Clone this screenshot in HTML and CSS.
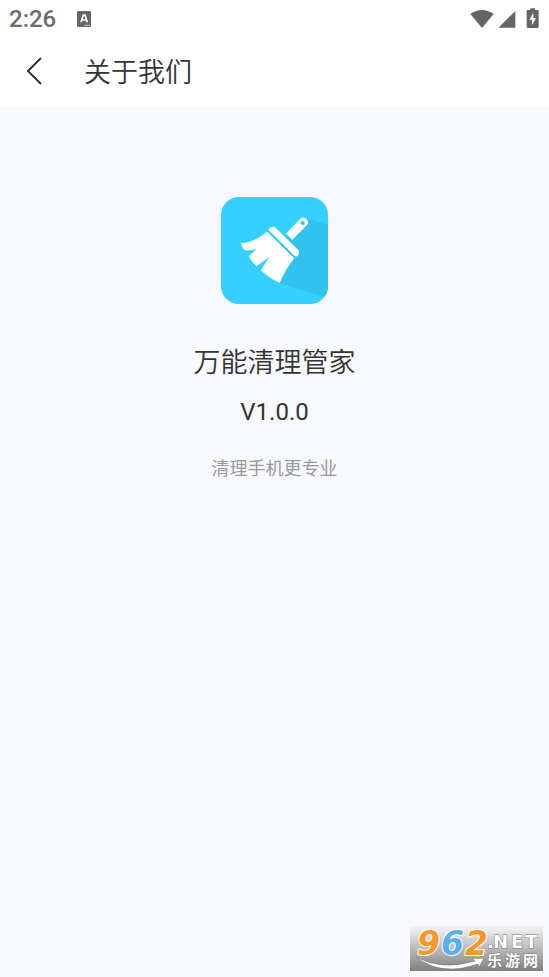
FILE: index.html
```html
<!DOCTYPE html>
<html lang="zh-CN">
<head>
<meta charset="utf-8">
<meta name="viewport" content="width=device-width, initial-scale=1">
<title>关于我们</title>
<link rel="stylesheet" href="styles.css">
</head>
<body>
<div class="status">
  <span class="clock">2:26</span>
  <svg class="notice" viewBox="0 0 42 48" aria-hidden="true">
    <rect width="42" height="48" rx="4" fill="#656565"/>
    <path d="M12 34 19 12h5l7 22M15 27h13" fill="none" stroke="#fff" stroke-width="5"/>
    <path d="M22 43h17" stroke="#fff" stroke-width="2"/>
  </svg>
  <svg class="signals" viewBox="0 0 210 66" aria-hidden="true">
    <g fill="#656565">
      <path d="M1 18Q36-6 71 18L36 60Z"/>
      <path d="M136 9v50H85Z"/>
      <path d="M181 1h14v5h7q4 0 4 4v46q0 4-4 4h-28q-4 0-4-4V10q0-4 4-4h7Z"/>
    </g>
    <path d="m190 14-12 21h8v17l12-22h-8Z" fill="#fff"/>
  </svg>
</div>
<header class="bar">
  <button class="back" type="button" aria-label="返回">
    <svg viewBox="0 0 18 28" aria-hidden="true"><path d="M16 1 3 14l13 13" fill="none" stroke="#333" stroke-width="2"/></svg>
  </button>
  <h1 class="title">关于我们</h1>
</header>
<main class="about">
  <svg class="logo" viewBox="21 21 321 321" aria-hidden="true">
    <defs><clipPath id="tile"><rect x="21" y="21" width="321" height="321" rx="54"/></clipPath></defs>
    <g clip-path="url(#tile)">
      <rect x="21" y="21" width="321" height="321" fill="#35d0ff"/>
      <path d="M275 83 342 105V325L197 279 180 180Z" fill="#31c2ee"/>
    </g>
    <path fill="#fff" fill-rule="evenodd" d="M216 131 258 87Q267 79 277 86 286 95 279 105L235 149ZM266 93a6 6 0 1 0 .1 0Z"/>
    <path fill="#fff" d="M163 119Q170 106 183 112L252 179Q258 187 251 198L244 200Z"/>
    <path fill="#fff" d="M159 125 241 205Q213 240 197 279 166 265 140 241L167 200 127 229Q112 213 104 198L129 176Q108 184 91 180 83 171 81 159 116 160 159 125Z"/>
  </svg>
  <h2 class="name">万能清理管家</h2>
  <p class="version">V1.0.0</p>
  <p class="slogan">清理手机更专业</p>
</main>
<svg class="mark" viewBox="0 0 133 45" role="img" aria-label="962.NET 乐游网">
  <defs>
    <linearGradient id="fade" x2="0" y2="1"><stop stop-color="#f4f4f7"/><stop offset="1" stop-color="#808080"/></linearGradient>
  </defs>
  <rect width="133" height="45" fill="url(#fade)"/>
  <path d="M6 31Q32 45 65 35L62 33 74 32 69 41 68 38Q31 51 6 31Z" fill="#fff" stroke="#777" stroke-width=".6"/>
  <text class="digits" x="7 31 55" y="29"><tspan class="orange">9</tspan><tspan class="blue">6</tspan><tspan class="orange">2</tspan></text>
  <text class="net" x="77 83 101 115" y="22">.NET</text>
  <text class="site" x="77 95 113" y="40">乐游网</text>
</svg>
</body>
</html>
```

FILE: styles.css
```css
* { box-sizing: border-box; }
body {
  margin: 0;
  min-height: 100vh;
  display: flex;
  flex-direction: column;
  background: #f8f9ff;
  color: #333;
  font-family: Roboto, "Noto Sans CJK SC", sans-serif;
}
.status {
  display: flex;
  align-items: center;
  height: 38px;
  padding: 0 9px;
  background: #fff;
}
.clock {
  font-size: 24px;
  line-height: 38px;
  font-weight: 500;
  color: #6c6c6c;
}
.notice { width: 14px; height: 16px; margin-left: 21px; }
.signals { width: 70px; height: 22px; margin-left: auto; }
.bar {
  display: flex;
  align-items: center;
  height: 68px;
  gap: 32px;
  padding: 0 16px 2px;
  background: #fff;
}
.back {
  width: 36px;
  height: 48px;
  padding: 0;
  border: 0;
  background: none;
}
.back svg { display: block; width: 18px; height: 28px; margin: 0 auto; }
.title, .name {
  margin: 0;
  font-size: 27px;
  line-height: 40px;
  font-weight: 350;
  font-family: "Noto Sans CJK SC", sans-serif;
}
.about {
  flex: 1;
  display: flex;
  flex-direction: column;
  align-items: center;
  padding-top: 91px;
}
.logo { width: 107px; height: 107px; }
.name { margin-top: 37px; }
.version {
  margin: 16px 0 0;
  font-size: 24px;
  line-height: 30px;
}
.slogan {
  margin: 29px 0 0;
  font-size: 18px;
  line-height: 26px;
  color: #999;
}
.mark {
  position: fixed;
  right: 6px;
  bottom: 6px;
  width: 133px;
  height: 45px;
}
.mark text { paint-order: stroke; stroke-linejoin: round; }
.digits {
  font: italic bold 33px "DejaVu Sans", sans-serif;
  stroke: #fff;
  stroke-width: 2px;
}
.orange { fill: #f7962b; }
.blue { fill: #5bb0e6; }
.net, .site { fill: #fff; stroke: #777; stroke-width: 1px; }
.net { font: bold 18px "DejaVu Sans", sans-serif; }
.site { font: bold 15px "Noto Sans CJK SC", sans-serif; }
```
